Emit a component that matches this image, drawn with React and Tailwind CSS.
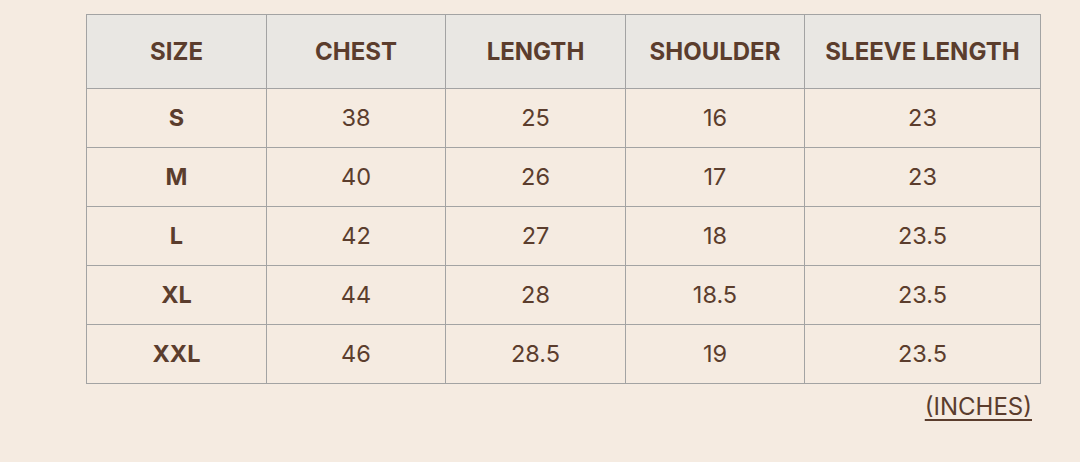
import React from 'react';

const headers = ['SIZE', 'CHEST', 'LENGTH', 'SHOULDER', 'SLEEVE LENGTH'];

const rows = [
  ['S', '38', '25', '16', '23'],
  ['M', '40', '26', '17', '23'],
  ['L', '42', '27', '18', '23.5'],
  ['XL', '44', '28', '18.5', '23.5'],
  ['XXL', '46', '28.5', '19', '23.5'],
];

const App = () => {
  return (
    <div className="w-[1080px] h-[462px] bg-[#f5ebe1] text-[#5b3d2d] pt-[14px] font-['Inter','Liberation_Sans',sans-serif]">
      <div className="ml-[86px] w-[955px]">
        <table className="w-full border-collapse table-fixed">
          <colgroup>
            <col className="w-[180px]" />
            <col className="w-[179px]" />
            <col className="w-[180px]" />
            <col className="w-[179px]" />
            <col />
          </colgroup>
          <thead>
            <tr className="bg-[#e9e7e3]">
              {headers.map((h) => (
                <th key={h} className="h-[74px] border border-[#a3a3a3] text-[24px] font-bold text-center p-0">
                  {h}
                </th>
              ))}
            </tr>
          </thead>
          <tbody>
            {rows.map((r) => (
              <tr key={r[0]}>
                {r.map((c, i) => (
                  <td
                    key={i}
                    className={`h-[59px] border border-[#a3a3a3] text-[23.5px] text-center p-0 ${i === 0 ? 'font-bold' : 'font-normal'}`}
                  >
                    {c}
                  </td>
                ))}
              </tr>
            ))}
          </tbody>
        </table>
        <div className="flex justify-end pr-[9px] pt-[8px]">
          <span className="text-[24px] leading-[30px] underline underline-offset-4">(INCHES)</span>
        </div>
      </div>
    </div>
  );
};

export default App;
